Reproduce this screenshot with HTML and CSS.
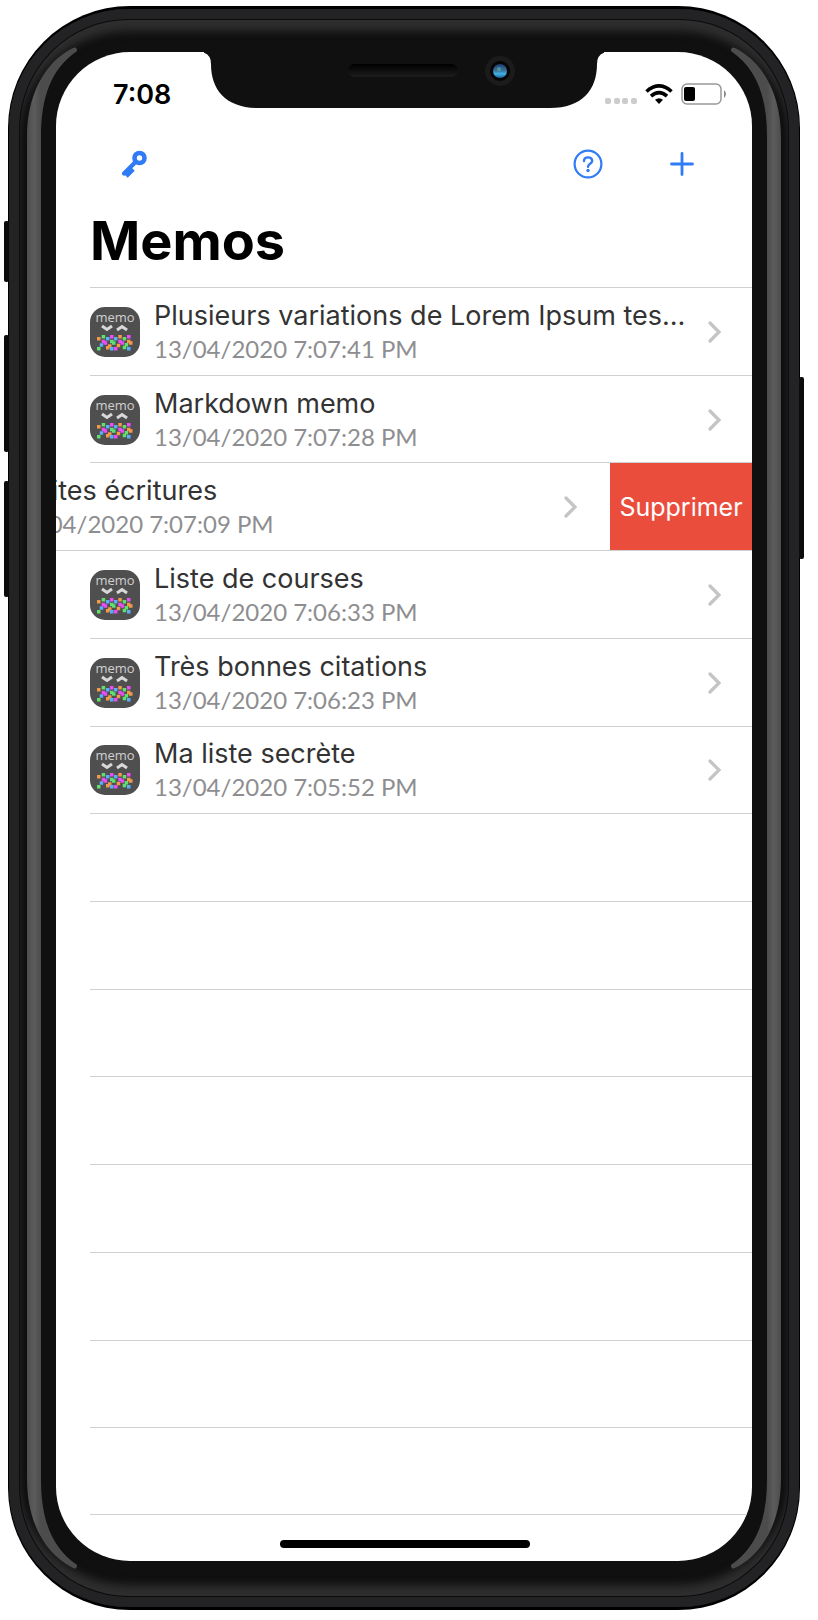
FILE: index.html
```html
<!DOCTYPE html>
<html lang="fr">
<head>
<meta charset="utf-8">
<meta name="viewport" content="width=device-width, initial-scale=1">
<title>Memos</title>
<link rel="stylesheet" href="styles.css">
</head>
<body>
<svg class="sprites" aria-hidden="true">
  <symbol id="memo-logo" viewBox="0 0 50 50">
    <rect width="50" height="50" rx="15" fill="#4f4f4f"/>
    <text x="25" y="15" text-anchor="middle" class="logo-word">memo</text>
    <path d="M12 19l5 3.500 5-3.500M27 23l5-3.500 5 3.500" fill="none" stroke="#d8d8d8" stroke-width="3"/>
    <path fill="#f2994a" d="M7 30h3.500v3.500h-3.500zM28.300 28h3.500v3.500h-3.500zM37 32.700h3.500v3.500h-3.500zM39 34.300h3.500v3.500h-3.500zM18 37.300h3.500v3.500h-3.500zM16 39h3.500v3.500h-3.500zM26.700 36.700h3.500v3.500h-3.500z"/>
    <path fill="#5fe070" d="M11.700 28h3.500v3.500h-3.500zM20 32.700h3.500v3.500h-3.500zM22 34.300h3.500v3.500h-3.500zM32.700 30h3.500v3.500h-3.500zM34.700 36h3.500v3.500h-3.500zM32.700 38.700h3.500v3.500h-3.500zM7 40h3.500v3.500h-3.500z"/>
    <path fill="#5aaefa" d="M16 30h3.500v3.500h-3.500zM24 30h3.500v3.500h-3.500zM9.700 36.300h3.500v3.500h-3.500zM20 40h3.500v3.500h-3.500zM37 40h3.500v3.500h-3.500z"/>
    <path fill="#ea4df2" d="M20 28h3.500v3.500h-3.500zM11.700 32.700h3.500v3.500h-3.500zM13.700 34.300h3.500v3.500h-3.500zM28.300 32.700h3.500v3.500h-3.500zM30.700 34.300h3.500v3.500h-3.500zM37 28h3.500v3.500h-3.500zM24 40h3.500v3.500h-3.500z"/>
  </symbol>
  <symbol id="chevron" viewBox="0 0 14 22">
    <path d="M2 2l9 9-9 9" fill="none" stroke="#c4c4c6" stroke-width="3.200" stroke-linecap="round" stroke-linejoin="miter"/>
  </symbol>
  <linearGradient id="shine" gradientUnits="userSpaceOnUse" x1="0" x2="14" y1="0" y2="0"><stop offset="0" stop-color="#4c4c4c"/><stop offset=".5" stop-color="#5c5c5c"/><stop offset="1" stop-color="#4c4c4c"/></linearGradient>
  <symbol id="shine-end" viewBox="0 0 52 90">
    <path d="M0 90C0 50 16 16 46 1Q50-1 50 4C24 22 14 50 14 90Z" fill="url(#shine)"/>
  </symbol>
</svg>

<div class="phone">
  <span class="key key-mute"></span>
  <span class="key key-up"></span>
  <span class="key key-down"></span>
  <span class="key key-power"></span>
  <div class="shell">
    <div class="rim">
      <div class="glare" aria-hidden="true">
        <svg><use href="#shine-end"/></svg><i></i><svg class="flip"><use href="#shine-end"/></svg>
      </div>
      <div class="glare glare-right" aria-hidden="true">
        <svg><use href="#shine-end"/></svg><i></i><svg class="flip"><use href="#shine-end"/></svg>
      </div>
      <div class="screen">
        <div class="status">
          <time class="clock">7:08</time>
          <svg class="notch" viewBox="4 0 400 57" aria-hidden="true">
            <defs>
              <linearGradient id="slot" x1="0" x2="0" y1="0" y2="1"><stop offset="0" stop-color="#000"/><stop offset="1" stop-color="#1d1d1d"/></linearGradient>
              <linearGradient id="lens" x1="0" x2="0" y1="0" y2="1"><stop offset="0" stop-color="#1d3c70"/><stop offset=".5" stop-color="#3a78a0"/><stop offset=".7" stop-color="#3fb4e8"/><stop offset="1" stop-color="#1c5c90"/></linearGradient>
            </defs>
            <path d="M0 0Q11 1 11 12C11 38 26 56 58 56H350C382 56 397 38 397 12Q397 1 408 0Z" fill="#101010"/>
            <rect x="148" y="12" width="110" height="13" rx="6.500" fill="url(#slot)"/>
            <circle cx="300" cy="19" r="15" fill="#1b1b1c"/>
            <circle cx="300" cy="19" r="10" fill="#050508"/>
            <circle cx="300" cy="19" r="7" fill="url(#lens)"/>
            <circle cx="299" cy="17" r="2" fill="#6fb0a0" opacity=".6"/>
          </svg>
          <div class="signals">
            <svg width="32" height="8" viewBox="0 0 32 8" fill="#ccc" role="img" aria-label="Réseau"><rect width="6" height="6" rx="2"/><rect x="9" width="6" height="6" rx="2"/><rect x="17" width="6" height="6" rx="2"/><rect x="26" width="6" height="6" rx="2"/></svg>
            <svg width="28" height="22" viewBox="0 0 28 22" role="img" aria-label="Wi-Fi"><g fill="none" stroke="#000" stroke-width="3.600"><path d="M1.500 7.500Q14-3.800 26.500 7.500"/><path d="M6 12.200Q14 5 22 12.200"/></g><path d="M14 20l-4-4.200q4-3 8 0z"/></svg>
            <svg width="46" height="23" viewBox="0 0 46 23" role="img" aria-label="Batterie"><rect x="1" y="1" width="39" height="20" rx="5" fill="none" stroke="#999" stroke-width="1.500"/><rect x="3" y="4" width="11" height="14" rx="2"/><path d="M43 7q4 4 0 8z" fill="#888"/></svg>
          </div>
        </div>

        <header class="toolbar">
          <button type="button" aria-label="Clé"><svg width="28" height="30" viewBox="0 0 28 30"><g fill="none" stroke="#2f7cf6"><circle cx="19.500" cy="9" r="5" stroke-width="4.600"/><path d="M15.500 13L4 24.500" stroke-width="4.200" stroke-linecap="round"/><path d="M6 23.500l3.500 3.500M9.500 20l3.500 3.500" stroke-width="5"/></g></svg></button>
          <div class="actions">
            <button type="button" aria-label="Aide"><svg width="30" height="30" viewBox="0 0 30 30"><circle cx="15" cy="15" r="13.400" fill="none" stroke="#2f7cf6" stroke-width="2.200"/><path d="M11 12C11 7.200 19.200 7.200 19.200 11.800C19.200 14.800 15 14.800 15 17.800" fill="none" stroke="#2f7cf6" stroke-width="2.400" stroke-linecap="round"/><circle cx="15" cy="21.500" r="1.700" fill="#2f7cf6"/></svg></button>
            <button type="button" aria-label="Ajouter"><svg width="26" height="26" viewBox="0 0 26 26"><path d="M13 2.500v21M2.500 13h21" stroke="#2f7cf6" stroke-width="2.800" stroke-linecap="round"/></svg></button>
          </div>
        </header>

        <h1>Memos</h1>

        <ul class="memos">
          <li><a class="memo" href="#"><svg class="logo"><use href="#memo-logo"/></svg><span class="text"><span class="name">Plusieurs variations de Lorem Ipsum test de memo</span><time>13/04/2020 7:07:41 PM</time></span><svg class="chevron"><use href="#chevron"/></svg></a></li>
          <li><a class="memo" href="#"><svg class="logo"><use href="#memo-logo"/></svg><span class="text"><span class="name">Markdown memo</span><time>13/04/2020 7:07:28 PM</time></span><svg class="chevron"><use href="#chevron"/></svg></a></li>
          <li class="swiped"><a class="memo" href="#"><svg class="logo"><use href="#memo-logo"/></svg><span class="text"><span class="name">Petites écritures</span><time>13/04/2020 7:07:09 PM</time></span><svg class="chevron"><use href="#chevron"/></svg></a><button type="button" class="delete">Supprimer</button></li>
          <li><a class="memo" href="#"><svg class="logo"><use href="#memo-logo"/></svg><span class="text"><span class="name">Liste de courses</span><time>13/04/2020 7:06:33 PM</time></span><svg class="chevron"><use href="#chevron"/></svg></a></li>
          <li><a class="memo" href="#"><svg class="logo"><use href="#memo-logo"/></svg><span class="text"><span class="name">Très bonnes citations</span><time>13/04/2020 7:06:23 PM</time></span><svg class="chevron"><use href="#chevron"/></svg></a></li>
          <li><a class="memo" href="#"><svg class="logo"><use href="#memo-logo"/></svg><span class="text"><span class="name">Ma liste secrète</span><time>13/04/2020 7:05:52 PM</time></span><svg class="chevron"><use href="#chevron"/></svg></a></li>
          <li></li><li></li><li></li><li></li><li></li><li></li><li></li><li></li>
        </ul>
        <div class="home"></div>
      </div>
    </div>
  </div>
</div>
</body>
</html>
```
FILE: styles.css
```css
* { box-sizing: border-box; }
body { margin: 0; background: #fff; font-family: Inter, "Liberation Sans", sans-serif; color: #333; }
button { border: 0; padding: 0; background: none; font: inherit; cursor: pointer; }
.sprites { position: absolute; width: 0; height: 0; }
.logo-word { font: 400 13px "Open Sans", sans-serif; fill: #d0d0d0; }

.phone { position: relative; display: flex; min-height: 100vh; padding: 6px 18px 10px 8px; }
.shell { flex: 1; min-width: 0; display: flex; padding: 3px 1px; border-radius: 122px; background: #000; }
.rim {
  position: relative; flex: 1; min-width: 0; display: flex; padding: 43px 47px 46px; border-radius: 120px;
  background: #101010;
  box-shadow: inset 0 0 0 10px #232325, inset 0 0 0 11px #0b0b0b, inset 0 14px 8px 8px #2e2e2e, inset 0 -14px 8px 8px #2e2e2e;
}
.key { position: absolute; left: 4px; width: 5px; border-radius: 2px; background: #0c0c0c; }
.key-mute { top: 221px; height: 61px; }
.key-up { top: 335px; height: 117px; }
.key-down { top: 481px; height: 116px; }
.key-power { left: auto; right: 14px; top: 377px; height: 182px; }

.glare { position: absolute; left: 18px; top: 38px; bottom: 38px; width: 52px; display: flex; flex-direction: column; }
.glare svg { width: 52px; height: 90px; }
.glare i { flex: 1; width: 14px; background: linear-gradient(90deg, #4c4c4c, #5c5c5c 50%, #4c4c4c); }
.glare .flip { transform: scaleY(-1); }
.glare-right { left: auto; right: 18px; transform: scaleX(-1); }

.screen {
  position: relative; flex: 1; min-width: 0; overflow: hidden; display: flex; flex-direction: column;
  border-radius: 74px; background: #fff;
}
.status { display: grid; grid-template-columns: 1fr 400px 1fr; height: 57px; }
.notch { width: 400px; height: 57px; }
.clock { padding: 27px 0 0 57px; font-size: 27px; line-height: 32px; font-weight: 600; color: #000; }
.signals { display: flex; align-items: flex-end; justify-content: flex-end; gap: 8px; padding: 0 25px 5px 0; }

.toolbar { display: flex; justify-content: space-between; align-items: center; height: 60px; margin: 25px 57px 0 64px; }
.toolbar button { display: flex; }
.actions { display: flex; align-items: center; gap: 66px; }
h1 { margin: 13px 34px 12px; font-size: 54px; line-height: 68px; font-weight: 700; color: #000; }

.memos { flex: 1; display: grid; grid-auto-rows: minmax(87px, 1fr); margin: 0 0 46px; padding: 0; list-style: none; }
.memos li { display: flex; min-width: 0; margin-left: 34px; border-top: 1px solid #d0d0d2; }
.memos li:last-child { border-bottom: 1px solid #d0d0d2; }
.memo { flex: 1; min-width: 0; display: flex; align-items: center; padding: 1px 30px 0 0; color: inherit; text-decoration: none; }
.logo { flex: none; width: 50px; height: 50px; }
.text { flex: 1; min-width: 0; margin-left: 14px; }
.name, .text time { display: block; white-space: nowrap; }
.name { overflow: hidden; text-overflow: ellipsis; font-size: 27px; line-height: 34px; }
.text time { font-family: Lato, sans-serif; font-size: 24px; line-height: 32px; color: #8e8e90; }
.chevron { flex: none; width: 14px; height: 22px; margin-left: 20px; }
.swiped .memo { flex: 0 0 100%; margin-left: -144px; }
.memos .swiped + li { margin-left: 0; padding-left: 34px; }
.delete { flex: 1 0 142px; margin-left: 2px; background: #eb4d3d; color: #fff; font-size: 25px; }

.home { position: absolute; left: 50%; bottom: 13px; width: 250px; height: 8px; margin-left: -124px; border-radius: 4px; background: #000; }
```
